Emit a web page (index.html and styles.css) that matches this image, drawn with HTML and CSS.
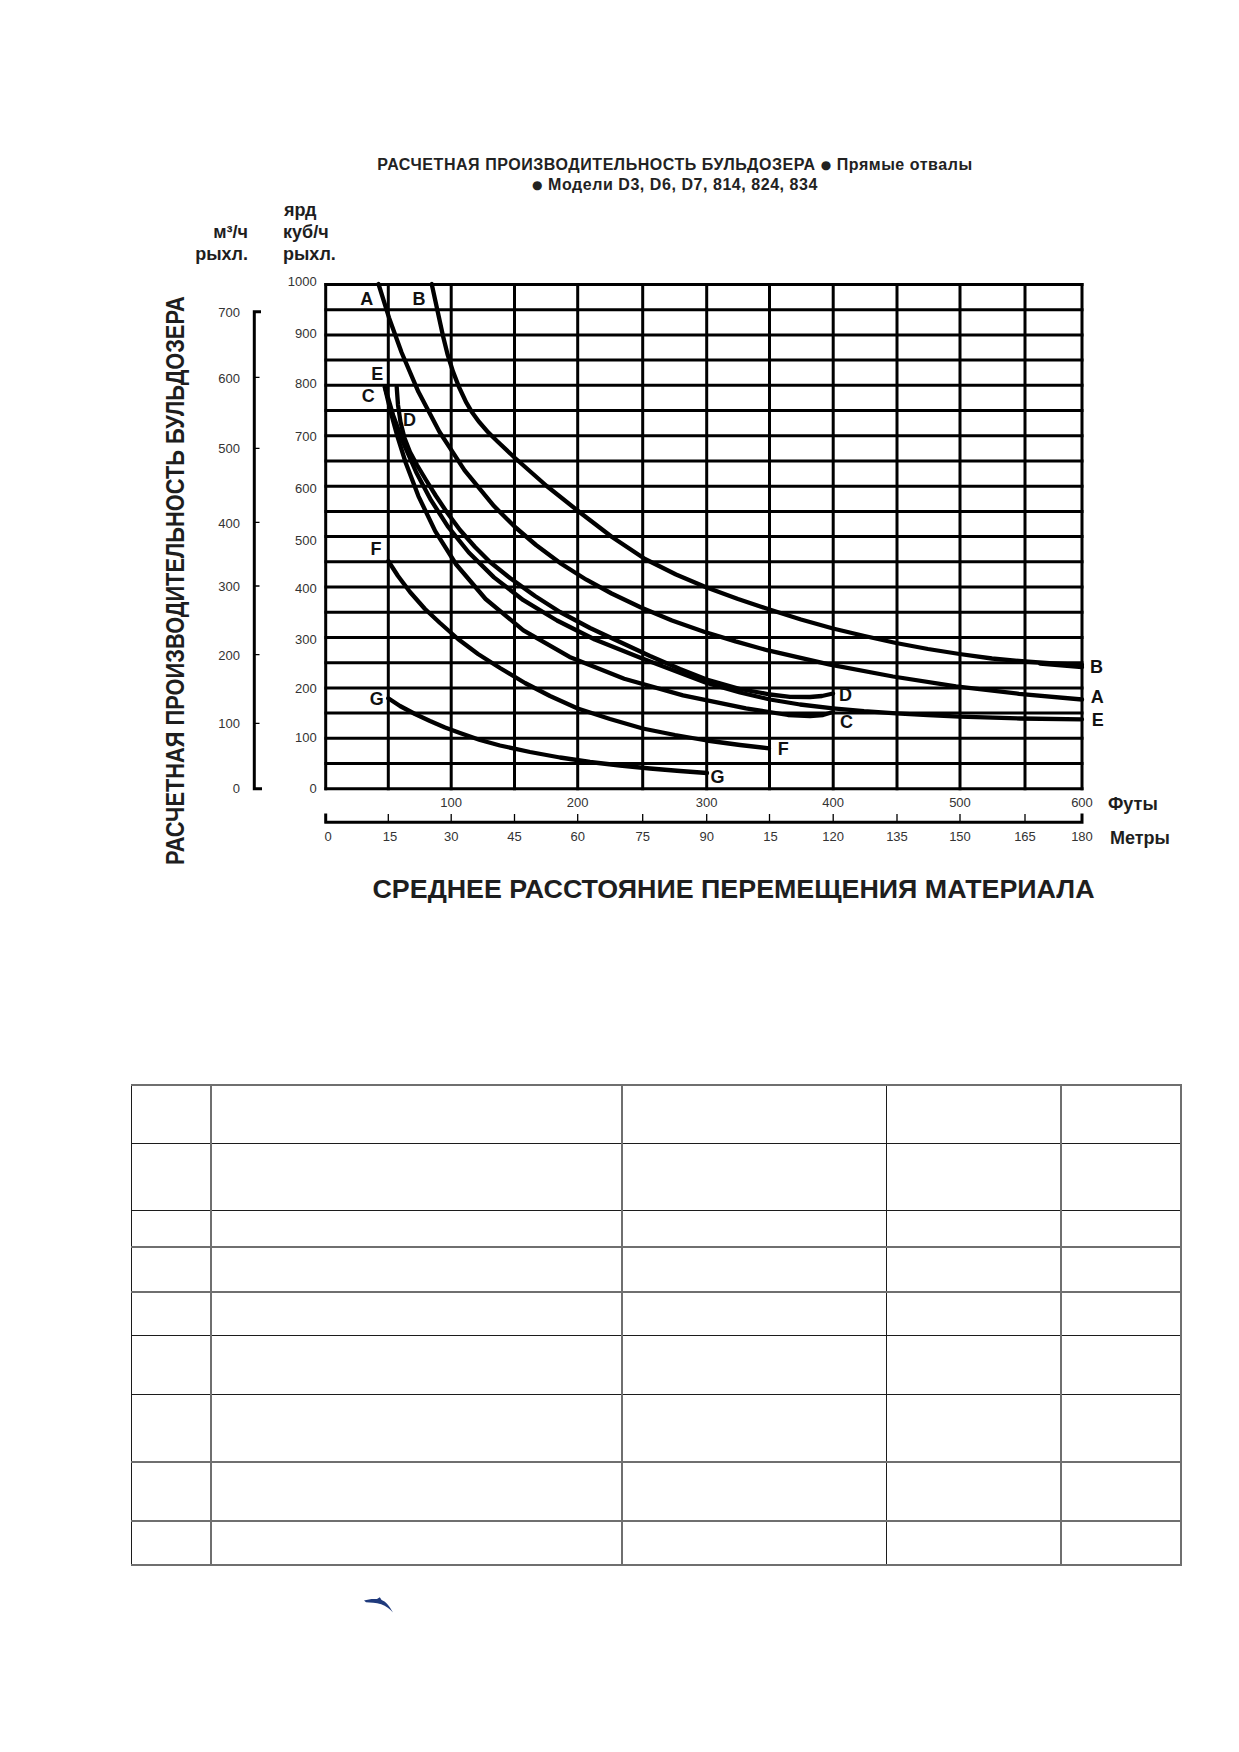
FILE: index.html
```html
<!DOCTYPE html>
<html lang="ru">
<head>
<meta charset="utf-8">
<title>Расчетная производительность бульдозера</title>
<link rel="stylesheet" href="styles.css">
</head>
<body>
<main class="page">
  <header class="chart-head">
    <p>РАСЧЕТНАЯ ПРОИЗВОДИТЕЛЬНОСТЬ БУЛЬДОЗЕРА <span class="dot">●</span> Прямые отвалы</p>
    <p><span class="dot">●</span> Модели D3, D6, D7, 814, 824, 834</p>
  </header>

  <figure class="chart">
    <svg viewBox="0 195 1239 715" xmlns="http://www.w3.org/2000/svg">
      <!-- unit captions -->
      <text class="unit" x="284" y="216">ярд</text>
      <text class="unit" x="283" y="237.5">куб/ч</text>
      <text class="unit" x="283" y="259.5">рыхл.</text>
      <text class="unit end" x="248" y="237.5">м³/ч</text>
      <text class="unit end" x="248" y="259.5">рыхл.</text>

      <!-- vertical title -->
      <text class="vtitle" transform="translate(184 865) rotate(-90) scale(0.84 1)">РАСЧЕТНАЯ ПРОИЗВОДИТЕЛЬНОСТЬ БУЛЬДОЗЕРА</text>

      <!-- m3 axis -->
      <path class="axis" d="M254.3 310.3V790.2M252.8 311.7H261M252.8 788.7H262"/>
      <path class="tick" d="M254 377.3H259.5M254 448.3H259.5M254 522.3H259.5M254 586H259.5M254 654.7H259.5M254 723.3H259.5"/>
      <g class="num end">
        <text x="240" y="317">700</text>
        <text x="240" y="383">600</text>
        <text x="240" y="453">500</text>
        <text x="240" y="528">400</text>
        <text x="240" y="591.3">300</text>
        <text x="240" y="659.7">200</text>
        <text x="240" y="728">100</text>
        <text x="240" y="793.3">0</text>
      </g>

      <!-- yd axis labels -->
      <g class="num end">
        <text x="316.7" y="286.3">1000</text>
        <text x="316.7" y="338">900</text>
        <text x="316.7" y="388">800</text>
        <text x="316.7" y="441">700</text>
        <text x="316.7" y="493">600</text>
        <text x="316.7" y="544.6">500</text>
        <text x="316.7" y="592.5">400</text>
        <text x="316.7" y="644">300</text>
        <text x="316.7" y="692.5">200</text>
        <text x="316.7" y="741.5">100</text>
        <text x="316.7" y="793">0</text>
      </g>

      <!-- grid -->
      <path class="grid" d="M324.5 284.5H1083.5M324.5 309.7H1083.5M324.5 334.9H1083.5M324.5 360.1H1083.5M324.5 385.3H1083.5M324.5 410.6H1083.5M324.5 435.8H1083.5M324.5 461H1083.5M324.5 486.2H1083.5M324.5 511.4H1083.5M324.5 536.6H1083.5M324.5 561.8H1083.5M324.5 587H1083.5M324.5 612.2H1083.5M324.5 637.4H1083.5M324.5 662.7H1083.5M324.5 687.9H1083.5M324.5 713.1H1083.5M324.5 738.3H1083.5M324.5 763.5H1083.5M324.5 788.7H1083.5"/>
      <path class="grid" d="M325.7 283V790.2M388.3 283V790.2M451.2 283V790.2M514.5 283V790.2M577.7 283V790.2M642.7 283V790.2M706.7 283V790.2M769.5 283V790.2M833.2 283V790.2M897 283V790.2M960 283V790.2M1025 283V790.2M1082 283V790.2"/>

      <!-- curves -->
      <path class="curve" d="M378.5 284L389 317.7L401.6 352.5L418.4 391.8L439.4 431.8L464.6 470.4L494 506.1L515 527L536 545L561.2 563.7L586.4 579.7L611.6 593.5L641 607.5L672 620.5L704 631.7L735.5 641.4L767 650.2L830 664.7L893 676.5L956 686.3L1019 693.8L1082 699.5"/>
      <path class="curve" d="M431.7 284L443 336Q451 372.8 466 402Q476 421.5 497 441L515 458L546.7 486L580 512.5L612 537L645 559L676 574.5L706.7 587.5L738 599L769.5 609.5L801 619.5L833 628.5L864.5 636L896 643L928 649L959.5 654L992 658.5L1025 661.5L1053 663.5L1082 665"/>
      <path class="curve" d="M1040 663.5L1082 667"/>
      <path class="curve" d="M384.8 387.3L391.1 413.5L397.4 436.4L405.8 463L418.4 496.1L435.2 531.1L456.2 564.5L485.6 599L523.4 630.3L569.6 656.9L624.2 678.8L683 695.4L746 708.4L788 715L810 716.2L823 715L833 712"/>
      <path class="curve" d="M385 387.3L393.2 415.4L403.7 443.8L416.3 472.5L431 500.2L447.8 526.3L468.8 552.5L494 577.4L523.4 600.2L557 620.5L594.8 639.5L641 658L706.7 683L740 692.5L770 699.5L800 704.5L833 708.3L864 711.2L896 713.3L928 715.2L959.5 716.7L1020 718.5L1082 719.3"/>
      <path class="curve" d="M396.7 387L398 405L400.5 422L404.5 438L410 452L417 465L426 480L436 496L446.7 512L460 530L475 547L490 562L510 578L535 596L560 612L590 628L620 642L650 656L680 669L706.7 679.5L740 689L770 694.5L790 696.8L810 697L822 696L833 693.5"/>
      <path class="curve" d="M388.3 561L398 576L410 592L425 609L440 623L458 639L478 654L500 668L525 683L550 696L577.7 708.5L610 719L642.7 728.5L675 735L706.7 740.5L740 745L769 748.3"/>
      <path class="curve" d="M388.3 698.3L400 706L415 714L430 721L445 727.5L460 733L480 740L500 745.5L530 752L560 757.5L590 762L620 765.5L650 768.5L680 771L707 773"/>

      <!-- curve labels -->
      <g class="lbl mid">
        <text x="366.7" y="304.7">A</text>
        <text x="419" y="304.7">B</text>
        <text x="377.3" y="380.4">E</text>
        <text x="368.3" y="402.4">C</text>
        <text x="376" y="554.7">F</text>
        <text x="376.7" y="704.7">G</text>
      </g>
      <g class="lbl">
        <text x="403" y="425.7">D</text>
        <text x="1090" y="673">B</text>
        <text x="1090.7" y="703">A</text>
        <text x="1091.7" y="726.4">E</text>
        <text x="839" y="701.4">D</text>
        <text x="840" y="728">C</text>
        <text x="777.7" y="754.7">F</text>
        <text x="710.5" y="782.7">G</text>
      </g>

      <!-- feet labels -->
      <g class="num mid">
        <text x="451.2" y="807.3">100</text>
        <text x="577.7" y="807.3">200</text>
        <text x="706.7" y="807.3">300</text>
        <text x="833.2" y="807.3">400</text>
        <text x="960" y="807.3">500</text>
        <text x="1082" y="807.3">600</text>
      </g>
      <text class="unit" x="1108" y="810">Футы</text>

      <!-- metre axis -->
      <path class="axis" d="M324.5 822.3H1083.5M325.7 813.5V823.5M1082 813.5V823.5"/>
      <path class="tick" d="M388.3 814V822M451.2 814V822M514.5 814V822M577.7 814V822M642.7 814V822M706.7 814V822M769.5 814V822M833.2 814V822M897 814V822M960 814V822M1025 814V822"/>
      <g class="num mid">
        <text x="328" y="841.3">0</text>
        <text x="390" y="841.3">15</text>
        <text x="451.2" y="841.3">30</text>
        <text x="514.5" y="841.3">45</text>
        <text x="577.7" y="841.3">60</text>
        <text x="642.7" y="841.3">75</text>
        <text x="706.7" y="841.3">90</text>
        <text x="770.5" y="841.3">15</text>
        <text x="833.2" y="841.3">120</text>
        <text x="897" y="841.3">135</text>
        <text x="960" y="841.3">150</text>
        <text x="1025" y="841.3">165</text>
        <text x="1082" y="841.3">180</text>
      </g>
      <text class="unit" x="1110" y="844">Метры</text>

      <!-- horizontal title -->
      <text class="htitle" x="372.5" y="898" textLength="722" lengthAdjust="spacingAndGlyphs">СРЕДНЕЕ РАССТОЯНИЕ ПЕРЕМЕЩЕНИЯ МАТЕРИАЛА</text>
    </svg>
  </figure>

  <table class="spec">
    <colgroup>
      <col class="w1"><col class="w2"><col class="w3"><col class="w4"><col class="w5">
    </colgroup>
    <tbody>
      <tr class="r1 gt"><td></td><td></td><td></td><td></td><td></td></tr>
      <tr class="r2"><td></td><td></td><td></td><td></td><td></td></tr>
      <tr class="r3"><td></td><td></td><td></td><td></td><td></td></tr>
      <tr class="r4 gt"><td></td><td></td><td></td><td></td><td></td></tr>
      <tr class="r5 gt"><td></td><td></td><td></td><td></td><td></td></tr>
      <tr class="r6"><td></td><td></td><td></td><td></td><td></td></tr>
      <tr class="r7"><td></td><td></td><td></td><td></td><td></td></tr>
      <tr class="r8 gt"><td></td><td></td><td></td><td></td><td></td></tr>
      <tr class="r9 gt gb"><td></td><td></td><td></td><td></td><td></td></tr>
    </tbody>
  </table>

  <footer class="logo">
    <svg class="dolphin" viewBox="0 0 30 16" xmlns="http://www.w3.org/2000/svg">
      <path d="M0 3.6C4 2.2 9 1.6 13 2.1L15.8 0.2L17.6 2.9C21.5 4.3 25.5 8.5 29 15.6C26 12.3 22 9 17.2 7.3C12 5.7 6.5 5.3 2 5.2Z"/>
    </svg>
  </footer>
</main>
</body>
</html>
```

FILE: styles.css
```css
html, body {
  margin: 0;
  background: #ffffff;
}

body {
  font-family: "Liberation Sans", Arial, sans-serif;
  color: #1a1a1a;
}

.page {
  width: 1239px;
  padding-top: 155px;
}

.chart-head {
  padding-left: 111px;
  text-align: center;
  font-size: 16px;
  font-weight: 700;
  line-height: 20px;
  letter-spacing: 0.55px;
  color: #222222;
}

.chart-head p {
  margin: 0;
}

.dot {
  font-family: "DejaVu Sans", sans-serif;
  font-size: 12px;
  vertical-align: 1px;
}

.chart {
  margin: 0;
}

.chart svg {
  display: block;
  width: 1239px;
  height: 715px;
}

.unit {
  font-family: "Liberation Sans", Arial, sans-serif;
  font-size: 18px;
  font-weight: 700;
  fill: #1e1e1e;
}

.end {
  text-anchor: end;
}

.mid {
  text-anchor: middle;
}

.vtitle {
  font-family: "Liberation Sans", Arial, sans-serif;
  font-size: 26px;
  font-weight: 700;
  fill: #1e1e1e;
}

.htitle {
  font-family: "Liberation Sans", Arial, sans-serif;
  font-size: 25.5px;
  font-weight: 700;
  fill: #1e1e1e;
}

.num {
  font-family: "Liberation Sans", Arial, sans-serif;
  font-size: 13px;
  fill: #333333;
}

.lbl {
  font-family: "Liberation Sans", Arial, sans-serif;
  font-size: 18px;
  font-weight: 700;
  fill: #111111;
}

.axis {
  fill: none;
  stroke: #000000;
  stroke-width: 3;
}

.tick {
  fill: none;
  stroke: #000000;
  stroke-width: 1.3;
}

.grid {
  fill: none;
  stroke: #000000;
  stroke-width: 3;
}

.curve {
  fill: none;
  stroke: #000000;
  stroke-width: 4.3;
  stroke-linejoin: round;
  stroke-linecap: round;
}

/* table */
.spec {
  margin: 174px 0 0 131px;
  width: 1049px;
  border-collapse: collapse;
  table-layout: fixed;
}

.w1 { width: 79px; }
.w2 { width: 411px; }
.w3 { width: 265px; }
.w4 { width: 174px; }
.w5 { width: 120px; }

.spec td {
  padding: 0;
  border: 1px solid #1c1c1c;
}

.spec td:nth-child(2),
.spec td:nth-child(3),
.spec td:nth-child(5) {
  border-left: 2px solid #6f6f6f;
}

.spec td:last-child {
  border-right: 2px solid #6f6f6f;
}

.spec .gt td {
  border-top: 2px solid #6f6f6f;
}

.spec .gb td {
  border-bottom: 2px solid #6f6f6f;
}

.r1 { height: 58px; }
.r2 { height: 67px; }
.r3 { height: 37px; }
.r4 { height: 45px; }
.r5 { height: 43px; }
.r6 { height: 59px; }
.r7 { height: 68px; }
.r8 { height: 59px; }
.r9 { height: 44px; }

.logo {
  margin: 31px 0 0 364px;
  height: 16px;
}

.dolphin {
  display: block;
  width: 30px;
  height: 16px;
  fill: #1f3a7c;
}
```
